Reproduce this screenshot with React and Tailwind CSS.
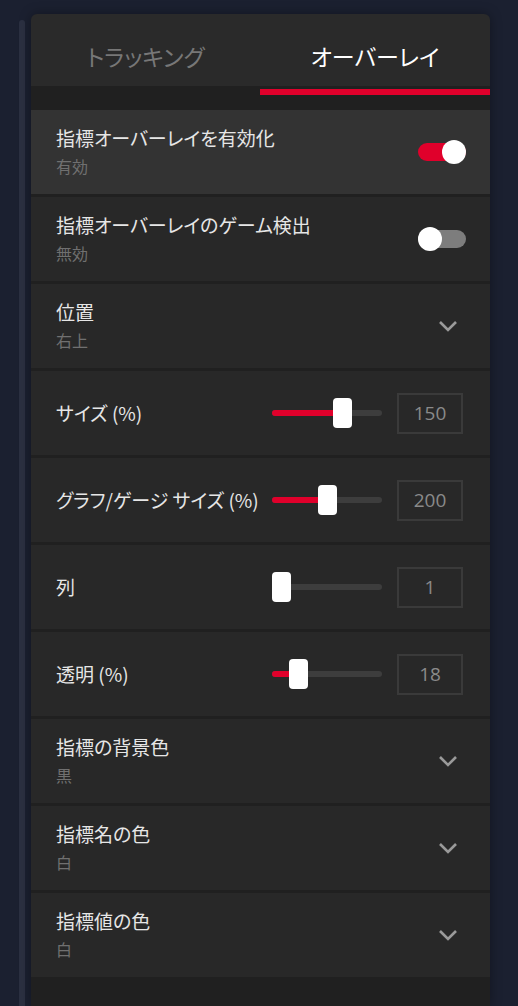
import React from "react";

const font = { fontFamily: '"Noto Sans CJK JP", "Noto Sans", sans-serif', fontFeatureSettings: '"palt"' };

const rows = [
    {kind: "toggle", title: "指標オーバーレイを有効化", sub: "有効", on: true, active: true},
    {kind: "toggle", title: "指標オーバーレイのゲーム検出", sub: "無効", on: false},
    {kind: "select", title: "位置", sub: "右上"},
    {kind: "slider", title: "サイズ (%)", value: "150", pos: 61},
    {kind: "slider", title: "グラフ/ゲージ サイズ (%)", value: "200", pos: 46},
    {kind: "slider", title: "列", value: "1", pos: 0},
    {kind: "slider", title: "透明 (%)", value: "18", pos: 17},
    {kind: "select", title: "指標の背景色", sub: "黒"},
    {kind: "select", title: "指標名の色", sub: "白"},
    {kind: "select", title: "指標値の色", sub: "白"},
];

const Toggle = ({on}) => (
    <div className="relative w-[48px] h-[24px] mr-[24px] flex items-center">
        <div className={`w-full h-[18px] rounded-full ${on ? "bg-[#e0002b]" : "bg-[#7d7d7d]"}`}/>
        <div className={`absolute top-0 w-[24px] h-[24px] rounded-full bg-white ${on ? "right-0" : "left-0"}`}/>
    </div>
);

const Chevron = () => (
    <svg width="20" height="12" viewBox="0 0 20 12" className="mr-[32px]">
        <path d="M2 2 L10 10 L18 2" fill="none" stroke="#9a9a9a" strokeWidth="2.6"/>
    </svg>
);

const Slider = ({value, pos}) => (
    <div className="flex items-center mr-[27px]">
        <div className="relative w-[110px] h-[30px] flex items-center">
            <div className="w-full h-[6px] rounded-full bg-[#3d3d3d]"/>
            <div className="absolute left-0 h-[6px] rounded-full bg-[#e0002b]" style={{width: pos + 9}}/>
            <div className="absolute top-0 w-[19px] h-[30px] rounded-[4px] bg-white" style={{left: pos}}/>
        </div>
        <div
            className="ml-[15px] w-[66px] h-[41px] border-2 border-[#3a3a3a] flex items-center justify-center text-[19px] text-[#8a8a8a]"
            style={{fontFamily: '"Open Sans", "Noto Sans", sans-serif'}}
        >
            {value}
        </div>
    </div>
);

export default function App() {
    return (
        <div className="min-h-screen bg-[#1b2030] flex pl-[19px] pt-[14px]" style={font}>
            {/* scrollbar */}
            <div className="w-[6px] mt-[6px] mr-[6px] bg-[#2b3041] rounded-t-full"/>

            <div className="w-[459px] rounded-t-[6px] bg-[#2a2a2a] flex flex-col shadow-[0_0_12px_rgba(0,0,0,0.35)]">
                {/* tabs */}
                <div className="h-[72px] flex pt-[13px]">
                    <div className="w-[229px] flex items-center justify-center text-[23px] text-[#777777]">
                        トラッキング
                    </div>
                    <div className="w-[230px] flex items-center justify-center text-[23px] text-white">
                        オーバーレイ
                    </div>
                </div>
                <div className="h-[24px] bg-[#202020] pt-[3px]">
                    <div className="ml-[229px] h-[6px] bg-[#e0002b]"/>
                </div>

                <div className="flex flex-col gap-[3px] bg-[#202020]">
                    {rows.map((r, i) => (
                        <div
                            key={i}
                            className={`h-[84px] flex items-center justify-between pl-[25px] ${r.active ? "bg-[#333333]" : "bg-[#282828]"}`}
                        >
                            <div className="flex flex-col">
                                <p className="text-[19px] leading-[28px] text-[#e6e6e6]">{r.title}</p>
                                {r.sub && <p className="text-[16px] leading-[28px] text-[#707070]">{r.sub}</p>}
                            </div>
                            {r.kind === "toggle" && <Toggle on={r.on}/>}
                            {r.kind === "select" && <Chevron/>}
                            {r.kind === "slider" && <Slider value={r.value} pos={r.pos}/>}
                        </div>
                    ))}
                </div>
                <div className="flex-1 bg-[#202020]"/>
            </div>
        </div>
    );
}
